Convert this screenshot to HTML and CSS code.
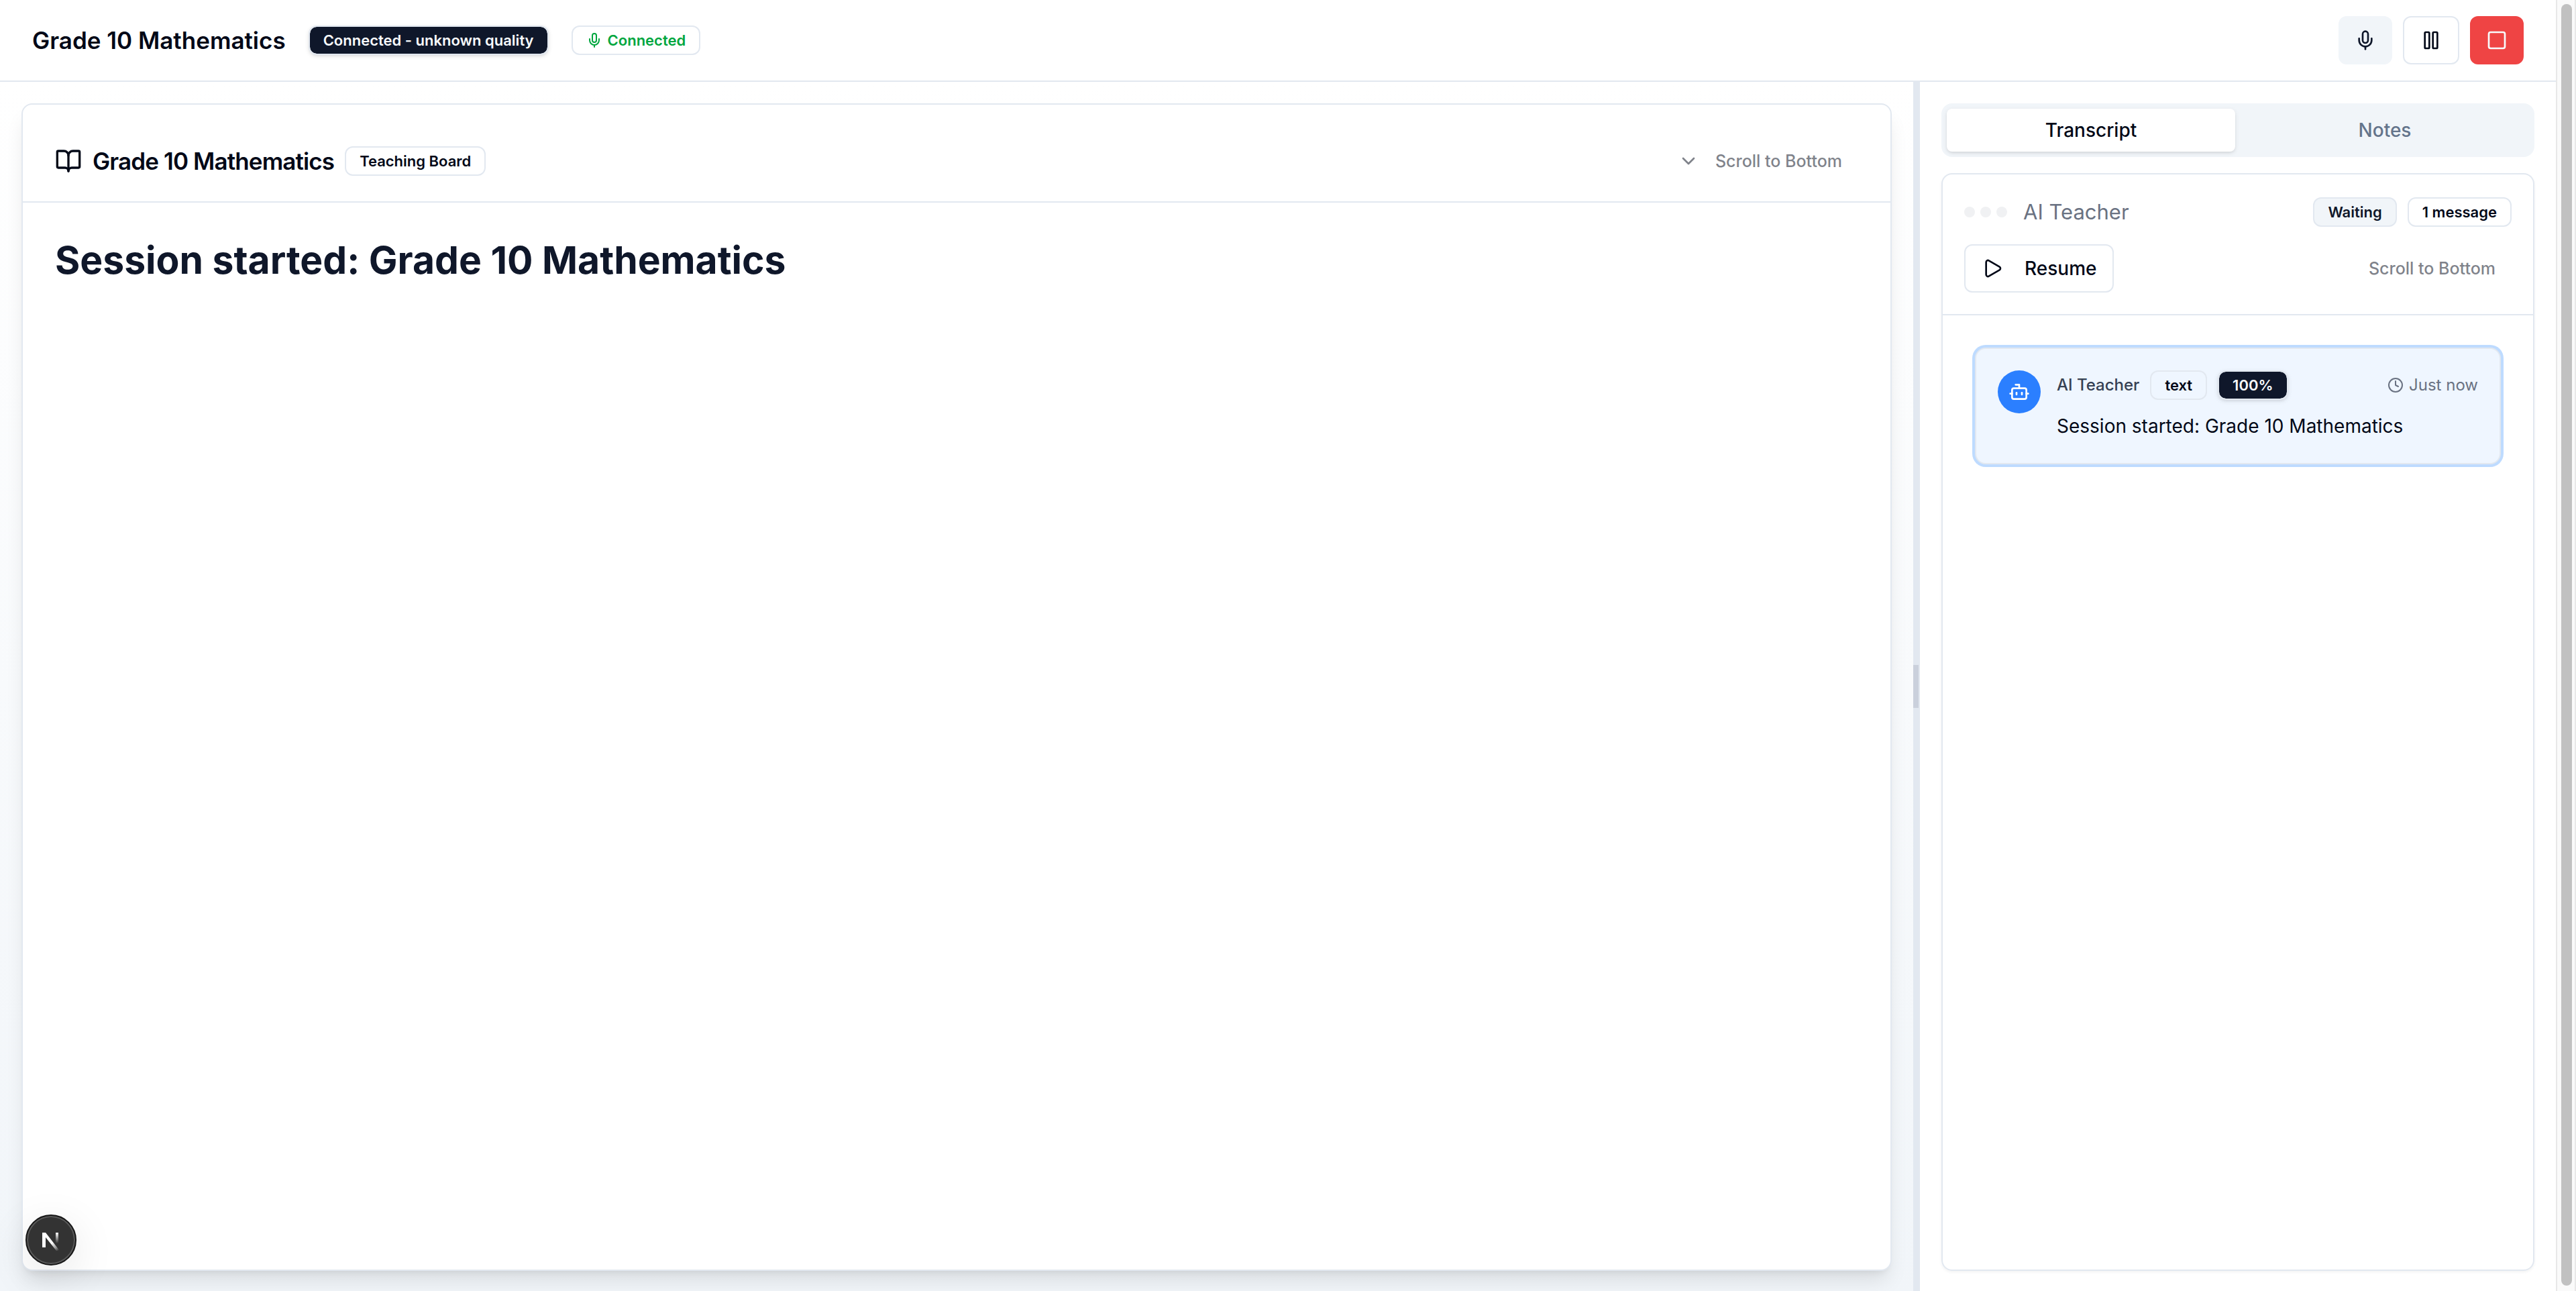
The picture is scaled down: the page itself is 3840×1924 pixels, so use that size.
FILE: index.html
```html
<!DOCTYPE html>
<html lang="en">
<head>
<meta charset="utf-8">
<title>Grade 10 Mathematics</title>
<link rel="stylesheet" href="styles.css">
</head>
<body>
<div class="app">
  <div class="page">
    <header class="topbar">
      <h1 class="topbar-title">Grade 10 Mathematics</h1>
      <span class="badge badge-dark">Connected - unknown quality</span>
      <span class="badge badge-green">
        <svg class="icon icon-sm" viewBox="0 0 24 24"><path d="M12 19v3"/><path d="M19 10v2a7 7 0 0 1-14 0v-2"/><rect x="9" y="2" width="6" height="13" rx="3"/></svg>
        Connected
      </span>
      <div class="controls">
        <button class="btn btn-muted" type="button" aria-label="Mute">
          <svg class="icon" viewBox="0 0 24 24"><path d="M12 19v3"/><path d="M19 10v2a7 7 0 0 1-14 0v-2"/><rect x="9" y="2" width="6" height="13" rx="3"/></svg>
        </button>
        <button class="btn btn-outline" type="button" aria-label="Pause">
          <svg class="icon" viewBox="0 0 24 24"><rect x="14" y="3" width="5" height="18" rx="1"/><rect x="5" y="3" width="5" height="18" rx="1"/></svg>
        </button>
        <button class="btn btn-danger" type="button" aria-label="Stop">
          <svg class="icon" viewBox="0 0 24 24"><rect x="3" y="3" width="18" height="18" rx="2"/></svg>
        </button>
      </div>
    </header>

    <div class="workspace">
      <main class="board-pane">
        <section class="board">
          <div class="board-head">
            <svg class="icon icon-lg" viewBox="0 0 24 24"><path d="M12 7v14"/><path d="M3 18a1 1 0 0 1-1-1V4a1 1 0 0 1 1-1h5a4 4 0 0 1 4 4 4 4 0 0 1 4-4h5a1 1 0 0 1 1 1v13a1 1 0 0 1-1 1h-6a3 3 0 0 0-3 3 3 3 0 0 0-3-3z"/></svg>
            <h2 class="board-title">Grade 10 Mathematics</h2>
            <span class="badge">Teaching Board</span>
            <button class="btn btn-ghost push" type="button" disabled>
              <svg class="icon" viewBox="0 0 24 24"><path d="m6 9 6 6 6-6"/></svg>
              Scroll to Bottom
            </button>
          </div>
          <div class="board-body">
            <h3 class="board-heading">Session started: Grade 10 Mathematics</h3>
          </div>
        </section>
      </main>

      <div class="splitter" role="separator" aria-orientation="vertical"><span class="grip"></span></div>

      <aside class="side-pane">
        <div class="tabs" role="tablist">
          <button class="tab tab-active" type="button" role="tab" aria-selected="true">Transcript</button>
          <button class="tab" type="button" role="tab" aria-selected="false">Notes</button>
        </div>
        <section class="transcript">
          <div class="transcript-head">
            <div class="row">
              <span class="dots"><i></i><i></i><i></i></span>
              <span class="speaker">AI Teacher</span>
              <span class="badge badge-muted push">Waiting</span>
              <span class="badge">1 message</span>
            </div>
            <div class="row">
              <button class="btn btn-outline btn-resume" type="button">
                <svg class="icon" viewBox="0 0 24 24"><path d="M5 5a2 2 0 0 1 3.008-1.728l11.997 6.998a2 2 0 0 1 .003 3.458l-12 7A2 2 0 0 1 5 19z"/></svg>
                Resume
              </button>
              <button class="btn btn-ghost push" type="button" disabled>Scroll to Bottom</button>
            </div>
          </div>
          <div class="messages">
            <article class="message">
              <span class="avatar">
                <svg class="icon" viewBox="0 0 24 24"><path d="M12 8V4H8"/><rect width="16" height="12" x="4" y="8" rx="2"/><path d="M2 14h2"/><path d="M20 14h2"/><path d="M15 13v2"/><path d="M9 13v2"/></svg>
              </span>
              <div class="message-main">
                <div class="message-meta">
                  <span class="author">AI Teacher</span>
                  <span class="badge">text</span>
                  <span class="badge badge-dark">100%</span>
                  <span class="time push">
                    <svg class="icon icon-sm" viewBox="0 0 24 24"><path d="M12 6v6l4 2"/><circle cx="12" cy="12" r="10"/></svg>
                    Just now
                  </span>
                </div>
                <p class="message-text">Session started: Grade 10 Mathematics</p>
              </div>
            </article>
          </div>
        </section>
      </aside>
    </div>
  </div>
  <div class="scrollbar" aria-hidden="true"><span class="thumb"></span></div>
</div>

<button class="dev-badge" type="button" aria-label="Open developer tools">
  <svg class="dev-logo" viewBox="0 0 40 40" fill="none">
    <defs>
      <linearGradient id="diag" gradientUnits="userSpaceOnUse" x1="22" y1="24" x2="31" y2="36"><stop stop-color="#fff"/><stop offset=".6" stop-color="#fff" stop-opacity=".5"/><stop offset="1" stop-color="#fff" stop-opacity="0"/></linearGradient>
      <linearGradient id="stem" gradientUnits="userSpaceOnUse" x1="28" y1="9" x2="28" y2="25"><stop stop-color="#fff"/><stop offset="1" stop-color="#fff" stop-opacity="0"/></linearGradient>
    </defs>
    <path d="M7 9h5L33 36h-5L12 16v15H7z" fill="url(#diag)"/>
    <path d="M27 9h4v16h-4z" fill="url(#stem)"/>
  </svg>
</button>
</body>
</html>
```
FILE: styles.css
```css
* { box-sizing: border-box; margin: 0; }

body {
  font-family: Inter, "Liberation Sans", sans-serif;
  font-size: 28px;
  line-height: 40px;
  color: #020817;
  background: #fff;
}

.app { display: flex; min-height: 100vh; }
.page { flex: 1; min-width: 0; display: flex; flex-direction: column; }

.push { margin-left: auto; }

.icon {
  flex: none;
  width: 32px;
  height: 32px;
  fill: none;
  stroke: currentColor;
  stroke-width: 2;
  stroke-linecap: round;
  stroke-linejoin: round;
}
.icon-sm { width: 24px; height: 24px; }
.icon-lg { width: 40px; height: 40px; }

/* Badges */
.badge {
  display: inline-flex;
  align-items: center;
  gap: 8px;
  padding: 4px 20px;
  border: 2px solid #e2e8f0;
  border-radius: 12px;
  font-size: 22px;
  font-weight: 600;
  line-height: 32px;
  white-space: nowrap;
}
.badge-dark {
  background: #0f172a;
  background-clip: padding-box;
  color: #f8fafc;
  box-shadow: 0 2px 6px rgba(0, 0, 0, .1), 0 2px 4px -2px rgba(0, 0, 0, .1);
}
.badge-green { color: #00a63e; }
.badge-muted { background: #f1f5f9; color: #0f172a; }

/* Buttons */
.btn {
  display: inline-flex;
  align-items: center;
  justify-content: center;
  height: 72px;
  padding: 0 24px;
  border: 0;
  border-radius: 12px;
  background: transparent;
  color: inherit;
  font: inherit;
  font-weight: 500;
  white-space: nowrap;
}
.btn-muted { background: #f1f5f9; color: #0f172a; }
.btn-outline { border: 2px solid #e2e8f0; background: #fff; }
.btn-danger { background: #ef4444; color: #f8fafc; }
.btn-ghost { gap: 24px; font-size: 25px; opacity: .5; }
.btn-resume { gap: 32px; }

/* Top bar */
.topbar {
  display: flex;
  align-items: center;
  gap: 34px;
  padding: 24px 48px;
  border-bottom: 2px solid #e2e8f0;
}
.topbar-title { font-size: 35px; font-weight: 600; line-height: 56px; }
.controls { display: flex; gap: 16px; margin-left: auto; }

.workspace { flex: 1; display: flex; }

/* Teaching board */
.board-pane {
  flex: 1;
  display: flex;
  min-width: 0;
  padding: 32px 32px 30px;
  background: linear-gradient(#fff, #f1f5f9);
}
.board {
  flex: 1;
  border: 2px solid #e2e8f0;
  border-radius: 16px;
  background: #fff;
  box-shadow: 0 20px 30px -6px rgba(0, 0, 0, .1), 0 8px 12px -8px rgba(0, 0, 0, .1);
}
.board-head {
  display: flex;
  align-items: center;
  gap: 16px;
  padding: 48px 48px 24px;
  border-bottom: 2px solid #e2e8f0;
}
.board-title {
  font-size: 35px;
  font-weight: 600;
  line-height: 36px;
  letter-spacing: -0.025em;
}
.board-body { padding: 48px; }
.board-heading { font-size: 57px; font-weight: 700; line-height: 76px; color: #0f172a; }

/* Resize handle */
.splitter { display: flex; align-items: center; width: 10px; background: #e2e8f0; }
.grip { width: 8px; height: 64px; background: #cad0dc; }

/* Side panel */
.side-pane {
  display: flex;
  flex-direction: column;
  gap: 24px;
  width: 25%;
  max-width: 948px;
  padding: 32px 32px 30px;
}
.tabs {
  display: flex;
  gap: 8px;
  padding: 8px;
  border-radius: 16px;
  background: #f1f5f9;
}
.tab {
  flex: 1;
  height: 64px;
  padding: 0 24px;
  border: 0;
  border-radius: 8px;
  background: transparent;
  color: #64748b;
  font: inherit;
  font-weight: 500;
}
.tab-active {
  background: #fff;
  color: #020817;
  box-shadow: 0 2px 6px rgba(0, 0, 0, .1), 0 2px 4px -2px rgba(0, 0, 0, .1);
}

.transcript {
  flex: 1;
  border: 2px solid #e2e8f0;
  border-radius: 16px;
  box-shadow: 0 2px 4px rgba(0, 0, 0, .05);
}
.transcript-head {
  display: flex;
  flex-direction: column;
  gap: 24px;
  padding: 32px;
  border-bottom: 2px solid #e2e8f0;
}
.row { display: flex; align-items: center; gap: 16px; }
.dots { display: flex; gap: 8px; margin-right: 8px; }
.dots i { width: 16px; height: 16px; border-radius: 50%; background: #f0f1f3; }
.speaker { font-size: 31px; line-height: 48px; color: #6a7282; }

.messages { padding: 48px; }
.message {
  display: flex;
  gap: 24px;
  padding: 32px;
  border: 2px solid #e2e8f0;
  border-radius: 16px;
  background: #eff6ff;
  box-shadow: 0 0 0 4px #bedbff;
}
.avatar {
  display: flex;
  flex: none;
  align-items: center;
  justify-content: center;
  width: 64px;
  height: 64px;
  border-radius: 50%;
  background: #2b7fff;
  color: #fff;
}
.message-main { flex: 1; min-width: 0; }
.message-meta { display: flex; align-items: center; gap: 16px; margin-bottom: 16px; }
.author { font-size: 24px; font-weight: 500; line-height: 32px; color: #364153; }
.time {
  display: flex;
  align-items: center;
  gap: 8px;
  font-size: 24px;
  line-height: 32px;
  color: #6a7282;
}
.message-text { line-height: 46px; }

/* Page scroll track */
.scrollbar {
  display: flex;
  width: 30px;
  padding: 6px 4px 8px 6px;
  border: solid #e8e8e8;
  border-width: 0 2px;
  background: #fafafa;
}
.thumb { width: 16px; border-radius: 8px; background: #c1c1c1; }

/* Floating developer badge */
.dev-badge {
  position: fixed;
  left: 38px;
  bottom: 38px;
  display: flex;
  align-items: center;
  justify-content: center;
  width: 76px;
  height: 76px;
  padding: 0;
  border: 2px solid #171717;
  border-radius: 50%;
  background: #333;
  box-shadow: inset 0 0 0 2px #5a5a5a, 0 16px 64px rgba(0, 0, 0, .1);
}
.dev-logo { width: 40px; height: 40px; }
```
